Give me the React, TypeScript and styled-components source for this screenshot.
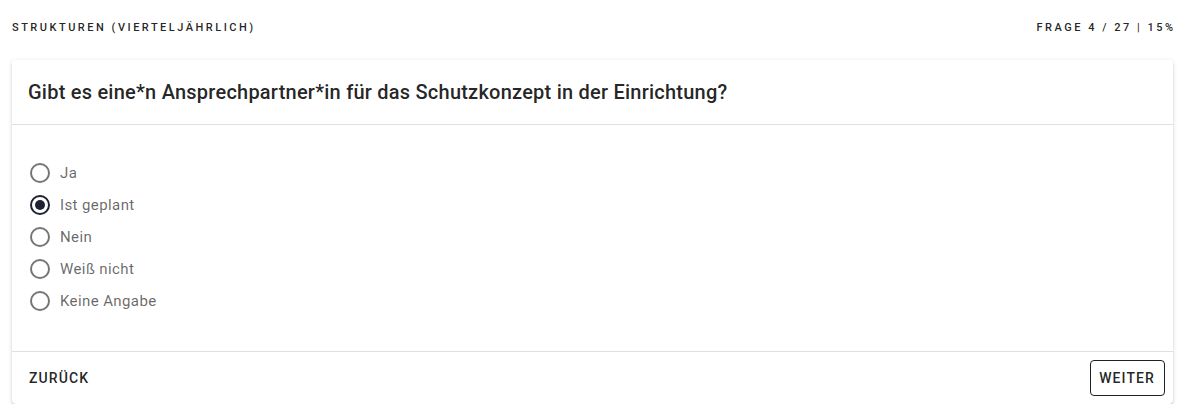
import React, { useState } from "react";
import styled, { createGlobalStyle } from "styled-components";

const Global = createGlobalStyle`
  html, body { margin: 0; padding: 0; background: #fff; }
  body { font-family: Roboto, "Liberation Sans", sans-serif; color: rgba(0,0,0,0.87); }
  * { box-sizing: border-box; }
`;

const Page = styled.div`
  padding: 0 12px;
`;

const TopBar = styled.div`
  height: 60px;
  display: flex;
  align-items: center;
  justify-content: space-between;
  padding-bottom: 6px;
`;

const Overline = styled.div`
  font-size: 11px;
  font-weight: 500;
  letter-spacing: 2.5px;
  margin-right: -2.5px;
  text-transform: uppercase;
  color: rgba(0,0,0,0.87);
`;

const Card = styled.div`
  background: #fff;
  border-radius: 4px;
  box-shadow: 0px 3px 1px -2px rgba(0,0,0,0.2), 0px 2px 2px 0px rgba(0,0,0,0.14), 0px 1px 5px 0px rgba(0,0,0,0.12);
  display: flex;
  flex-direction: column;
`;

const CardHeader = styled.div`
  height: 65px;
  display: flex;
  align-items: center;
  padding: 0 16px;
  border-bottom: 1px solid rgba(0,0,0,0.12);
`;

const Title = styled.h2`
  margin: 0;
  font-size: 20px;
  font-weight: 500;
  letter-spacing: 0.23px;
  color: rgba(0,0,0,0.87);
`;

const Options = styled.div`
  display: flex;
  flex-direction: column;
  padding: 32px 18px 34px;
  border-bottom: 1px solid rgba(0,0,0,0.12);
`;

const OptionRow = styled.label`
  height: 32px;
  display: flex;
  align-items: center;
  gap: 10px;
  cursor: pointer;
`;

const RadioIcon = styled.span<{ $checked: boolean }>`
  width: 20px;
  height: 20px;
  border-radius: 50%;
  border: 2px solid ${(p) => (p.$checked ? "#1f2233" : "rgba(0,0,0,0.54)")};
  display: flex;
  align-items: center;
  justify-content: center;
  &::after {
    content: "";
    width: 10px;
    height: 10px;
    border-radius: 50%;
    background: #1f2233;
    display: ${(p) => (p.$checked ? "block" : "none")};
  }
`;

const OptionText = styled.span`
  font-size: 15px;
  color: rgba(0,0,0,0.6);
  letter-spacing: 0.4px;
`;

const Footer = styled.div`
  height: 52px;
  display: flex;
  align-items: center;
  justify-content: space-between;
  padding: 0 8px;
`;

const TextButton = styled.button<{ $outlined?: boolean }>`
  font-family: Roboto, "Liberation Sans", sans-serif;
  font-size: 14px;
  font-weight: 500;
  letter-spacing: 1.1px;
  text-transform: uppercase;
  color: rgba(0,0,0,0.87);
  background: transparent;
  height: 36px;
  padding: 0 9px 0 8px;
  border-radius: 4px;
  border: ${(p) => (p.$outlined ? "1px solid rgba(0,0,0,0.87)" : "1px solid transparent")};
  cursor: pointer;
`;

const options = ["Ja", "Ist geplant", "Nein", "Weiß nicht", "Keine Angabe"];

export default function App() {
  const [sel, setSel] = useState("Ist geplant");
  return (
    <Page>
      <Global />
      <TopBar>
        <Overline>Strukturen (vierteljährlich)</Overline>
        <Overline>Frage 4 / 27 | 15%</Overline>
      </TopBar>
      <Card>
        <CardHeader>
          <Title>Gibt es eine*n Ansprechpartner*in für das Schutzkonzept in der Einrichtung?</Title>
        </CardHeader>
        <Options>
          {options.map((o) => (
            <OptionRow key={o} onClick={() => setSel(o)}>
              <RadioIcon $checked={sel === o} />
              <OptionText>{o}</OptionText>
            </OptionRow>
          ))}
        </Options>
        <Footer>
          <TextButton>Zurück</TextButton>
          <TextButton $outlined>Weiter</TextButton>
        </Footer>
      </Card>
    </Page>
  );
}
